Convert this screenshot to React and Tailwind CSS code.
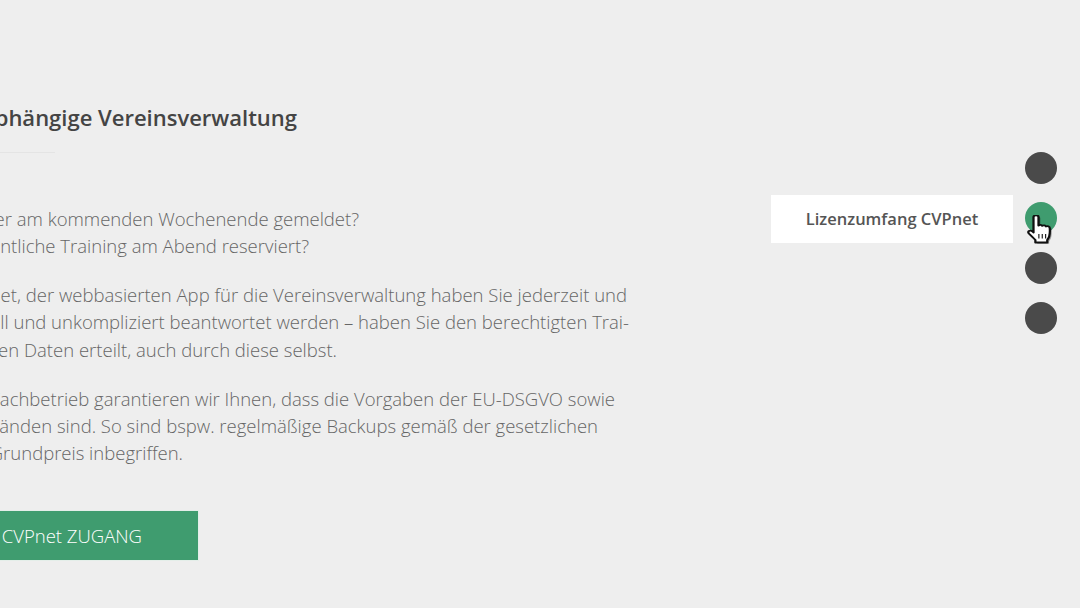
const FONT = "font-['Open_Sans',sans-serif]";

const HAND =
  "M6.200 3c0-2.200 4-2.200 4 0v8.600c1-1 2.500-.8 3 .3 1-.8 2.500-.5 3 .6 1-.6 3-.2 3 1.500.2 2.600.1 5.800-.4 8.200-.3 1.500-1 2.600-1.600 3.800v2.500H7.700v-2.500c-1.500-2-3.300-4-5-6.200-.8-1.100-.9-2.100-.1-2.800.9-.7 2-.4 2.900.5l.7 1z";

// the copy runs off the left edge, so each line is anchored on its right end
const Line = ({ className, children }) => (
  <div className={`flex justify-end whitespace-nowrap ${className}`}>
    <span>{children}</span>
  </div>
);

const HandCursor = () => (
  <svg
    viewBox="1 1 20 32"
    preserveAspectRatio="none"
    className="absolute left-[2px] top-[13px] w-[25px] h-[32px]"
  >
    <path d={HAND} fill="#000" opacity="0.35" transform="translate(1.500 1.200)" />
    <path d={HAND} fill="#fff" stroke="#111" strokeWidth="1.800" strokeLinejoin="round" />
    <path d="M10.500 20v4.500M13.200 20v4.500M15.900 20v4.500" stroke="#111" strokeWidth="0.900" fill="none" />
  </svg>
);

const Dot = ({ active, label }) => (
  <div className="relative w-8 h-8">
    <div className={`w-8 h-8 rounded-full ${active ? "bg-[#3f9c6f]" : "bg-[#4a4a4a]"}`} />
    {label && (
      <div className="absolute right-[44px] top-[-7px] w-[242px] h-[48px] bg-white flex items-center justify-center text-[16.500px] font-semibold text-[#555]">
        {label}
      </div>
    )}
    {active && <HandCursor />}
  </div>
);

export default function App() {
  return (
    <div className={`${FONT} w-[1080px] h-[608px] overflow-hidden bg-[#eeeeee] flex justify-between`}>
      <main className="w-[700px] pt-[102px]">
        <Line className="w-[297px] text-[22px] leading-[30px] font-semibold text-[#444]">
          Unabhängige Vereinsverwaltung
        </Line>
        <div className="w-[55px] h-px bg-[#e4e4e4] mt-[20px]" />

        <div className="mt-[52px] text-[18.500px] leading-[27.300px] font-light text-[#666]">
          <Line className="w-[359px]">Wer hat sich für das Turnier am kommenden Wochenende gemeldet?</Line>
          <Line className="w-[309px]">Wer hat das wöchentliche Training am Abend reserviert?</Line>

          <div className="mt-[21.400px]">
            <Line className="w-[627px]">Mit CVPnet, der webbasierten App für die Vereinsverwaltung haben Sie jederzeit und</Line>
            <Line className="w-[629px]">Fragen schnell und unkompliziert beantwortet werden – haben Sie den berechtigten Trai-</Line>
            <Line className="w-[337px]">nern Zugriff auf ihren Daten erteilt, auch durch diese selbst.</Line>
          </div>

          <div className="mt-[22px]">
            <Line className="w-[615px]">Als IT-Fachbetrieb garantieren wir Ihnen, dass die Vorgaben der EU-DSGVO sowie</Line>
            <Line className="w-[598px]">in den besten Händen sind. So sind bspw. regelmäßige Backups gemäß der gesetzlichen</Line>
            <Line className="w-[183px]">Vorgaben im Grundpreis inbegriffen.</Line>
          </div>
        </div>

        <a className="mt-[43.600px] w-[199px] h-[51px] pr-[56px] flex items-center justify-end whitespace-nowrap bg-[#3f9c6f] border border-[#e4eee9] border-l-0 text-[18.500px] font-light text-white">
          CVPnet ZUGANG
        </a>
      </main>

      <nav className="w-[55px] pt-[152px] flex flex-col gap-[18px]">
        <Dot />
        <Dot active label="Lizenzumfang CVPnet" />
        <Dot />
        <Dot />
      </nav>
    </div>
  );
}
